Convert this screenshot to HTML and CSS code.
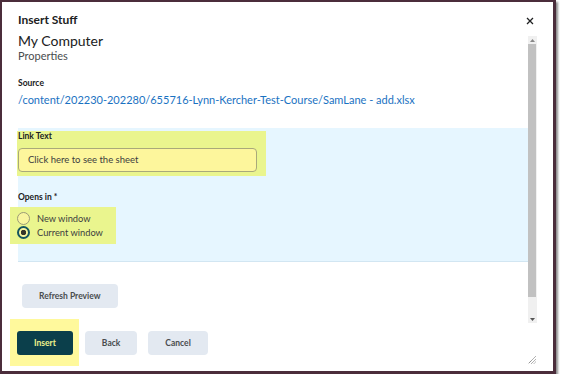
FILE: index.html
```html
<!DOCTYPE html>
<html>
<head>
<meta charset="utf-8">
<link rel="stylesheet" href="styles.css">
</head>
<body>
<div class="dialog">
  <div class="header">
    <div class="title">Insert Stuff</div>
    <svg class="close" width="8" height="8" viewBox="0 0 8 8"><path d="M1 1L7 7M7 1L1 7" stroke="#202122" stroke-width="1.3" fill="none"/></svg>
  </div>
  <div class="body">
    <div class="scroll">
      <div class="h2">My Computer</div>
      <div class="sub">Properties</div>
      <div class="label src-label">Source</div>
      <div class="link">/content/202230-202280/655716-Lynn-Kercher-Test-Course/SamLane - add.xlsx</div>
      <div class="panel">
        <div class="hl hl-link">
          <div class="label">Link Text</div>
          <div class="input">Click here to see the sheet</div>
        </div>
        <div class="label opens">Opens in *</div>
        <div class="hl hl-radio">
          <div class="radio-row"><span class="radio"></span><span>New window</span></div>
          <div class="radio-row"><span class="radio checked"></span><span>Current window</span></div>
        </div>
      </div>
      <div class="refresh-row"><button class="btn">Refresh Preview</button></div>
    </div>
    <div class="scrollbar">
      <div class="sb-arrow"><svg width="5" height="3" viewBox="0 0 5 3"><path d="M0 3L2.5 0L5 3Z" fill="#888"/></svg></div>
      <div class="sb-thumb"></div>
      <div class="sb-track"></div>
      <div class="sb-arrow"><svg width="5" height="3" viewBox="0 0 5 3"><path d="M0 0L2.5 3L5 0Z" fill="#555"/></svg></div>
    </div>
  </div>
  <div class="footer">
    <div class="hl hl-insert"><button class="btn primary">Insert</button></div>
    <button class="btn">Back</button>
    <button class="btn">Cancel</button>
    <svg class="grip" width="9" height="9" viewBox="0 0 9 9"><path d="M8.5 1.5L1.5 8.5M8.5 4.5L4.5 8.5M8.5 7L7 8.5" stroke="#666" stroke-width="1" stroke-dasharray="1 0.6" fill="none"/></svg>
  </div>
</div>
</body>
</html>
```
FILE: styles.css
```css
* { box-sizing: border-box; }
html, body { margin: 0; padding: 0; background: #fff; }
body { font-family: Lato, "Open Sans", sans-serif; color: #202122; }

.dialog {
  width: 556px;
  height: 374px;
  border: 2px solid #4b2d3b;
  border-right-width: 3px;
  border-bottom-width: 3px;
  box-shadow: 2px 2px 2px rgba(0,0,0,0.45);
  background: #fff;
  display: flex;
  flex-direction: column;
}

.header {
  height: 30px;
  padding: 10px 19px 0 16px;
  display: flex;
  align-items: flex-start;
  justify-content: space-between;
}
.title { font-size: 12px; font-weight: 700; line-height: 16px; }
.close { margin-top: 5px; }

.body {
  height: 291px;
  display: flex;
  padding-right: 16px;
}
.scroll {
  flex: 1;
  padding-left: 16px;
  overflow: hidden;
}
.h2 { font-size: 14px; line-height: 16px; color: #202122; padding-top: 1px; }
.sub { font-size: 11px; line-height: 13px; color: #494c4e; }
.label { font-size: 8.5px; font-weight: 700; line-height: 11px; color: #202122; }
.src-label { margin-top: 16px; }
.link { font-size: 11px; line-height: 14px; color: #1a72c2; margin-top: 4px; }

.panel {
  margin-top: 21px;
  background: #e6f6ff;
  border-bottom: 1px solid #d2e6f2;
  padding: 3px 0 17px;
  height: 134px;
}
.hl-link {
  background: #eaf58e;
  width: 249px;
  margin-left: -1px;
  padding: 0 0 4px 1px;
}
.input {
  margin-top: 6px;
  width: 239px;
  height: 24px;
  border: 1px solid #a9a97a;
  border-radius: 4px;
  background: #fdf69c;
  font-size: 9.5px;
  color: #3c3d3e;
  padding-left: 9px;
  line-height: 22px;
}
.opens { margin-top: 16px; }
.hl-radio {
  margin-top: 4px;
  margin-left: -8px;
  width: 106px;
  background: #eaf58e;
  padding: 4px 0 4px 7px;
}
.radio-row {
  display: flex;
  align-items: center;
  height: 14.5px;
  font-size: 9.3px;
  color: #3c3d3e;
}
.radio {
  width: 13px;
  height: 13px;
  border-radius: 50%;
  border: 1px solid #9b9b76;
  background: #f8f59e;
  margin-right: 7px;
  flex: none;
}
.radio.checked {
  border: 2px solid #15555f;
  background: radial-gradient(circle, #35352a 0 2.5px, #f8f59e 3px);
}

.refresh-row { margin-top: 21px; padding-left: 4px; }

.btn {
  font-family: Lato, "Open Sans", sans-serif;
  font-size: 8.5px;
  font-weight: 700;
  color: #494c4e;
  background: #e3e9f1;
  border: none;
  border-radius: 4px;
  height: 24px;
  padding: 0 17px;
  margin: 0;
}
.btn.primary { background: #0b3f4b; color: #eef28c; border-radius: 3px; }

.scrollbar {
  width: 9px;
  margin-top: 4px;
  height: 287px;
  background: #f0f0f0;
  display: flex;
  flex-direction: column;
}
.sb-arrow { height: 8px; display: flex; align-items: center; justify-content: center; }
.sb-thumb { height: 253px; background: #c1c1c1; margin-right: 1px; }
.sb-track { flex: 1; }

.footer {
  flex: 1;
  display: flex;
  align-items: flex-start;
  gap: 11px;
  padding: 8px 17px 0 16px;
}
.hl-insert {
  background: #fff99c;
  padding: 12px 6px 11px 7px;
  margin: -12px -5px -11px -8px;
  display: flex;
}
.grip { margin-left: auto; margin-top: 24px; }
```
